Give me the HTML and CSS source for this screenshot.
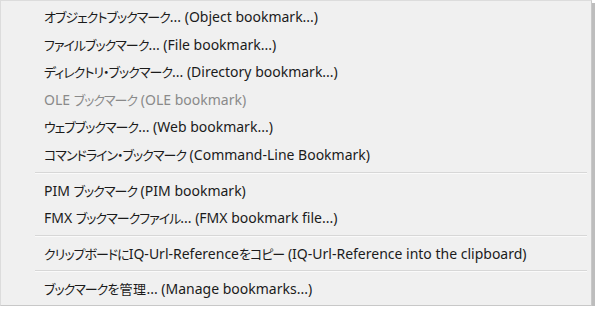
FILE: index.html
```html
<!DOCTYPE html>
<html>
<head>
    <title>Bookmarks menu</title>
    <link rel="stylesheet" href="styles.css">
</head>
<body>
    <div class="menu">
        <div class="item"><span class="ja">オブジェクトブックマーク</span>... (Object bookmark...)</div>
        <div class="item"><span class="ja">ファイルブックマーク</span>... (File bookmark...)</div>
        <div class="item"><span class="ja">ディレクトリ・ブックマーク</span>... (Directory bookmark...)</div>
        <div class="item disabled">OLE <span class="ja">ブックマーク</span> (OLE bookmark)</div>
        <div class="item"><span class="ja">ウェブブックマーク</span>... (Web bookmark...)</div>
        <div class="item"><span class="ja">コマンドライン・ブックマーク</span> (Command-Line Bookmark)</div>
        <div class="sep"></div>
        <div class="item">PIM <span class="ja">ブックマーク</span> (PIM bookmark)</div>
        <div class="item">FMX <span class="ja">ブックマークファイル</span>... (FMX bookmark file...)</div>
        <div class="sep"></div>
        <div class="item"><span class="ja">クリップボードに</span>IQ-Url-Reference<span class="ja">をコピー</span> (IQ-Url-Reference into the clipboard)</div>
        <div class="sep"></div>
        <div class="item"><span class="ja">ブックマークを<span class="kanji">管理</span></span>... (Manage bookmarks...)</div>
    </div>
</body>
</html>
```

FILE: styles.css
```css
body {
    margin: 0;
    background-color: #ffffff;
    font-family: "Noto Sans", "Noto Sans CJK JP", sans-serif;
}
.menu {
    width: 592px;
    height: 306px;
    box-sizing: border-box;
    background-color: #f0f0f0;
    border: 1px solid #dcdcdc;
    border-right-color: #c8c8c8;
    border-bottom-color: #c8c8c8;
    box-shadow: 3px 3px 0 #bdbdbd;
    padding-top: 2px;
}
.item {
    height: 27.6px;
    line-height: 27.6px;
    padding-left: 43px;
    font-size: 14px;
    font-feature-settings: "palt";
    color: #1b1b1b;
    white-space: nowrap;
}
.ja {
    font-size: 13px;
    letter-spacing: -1px;
}
.kanji {
    letter-spacing: 0.5px;
    padding-left: 1px;
}
.item.disabled {
    color: #8a8a8a;
}
.sep {
    height: 1px;
    background-color: #d7d7d7;
    border-bottom: 1px solid #fafafa;
    margin: 3px 4px 3px 34px;
}
```
